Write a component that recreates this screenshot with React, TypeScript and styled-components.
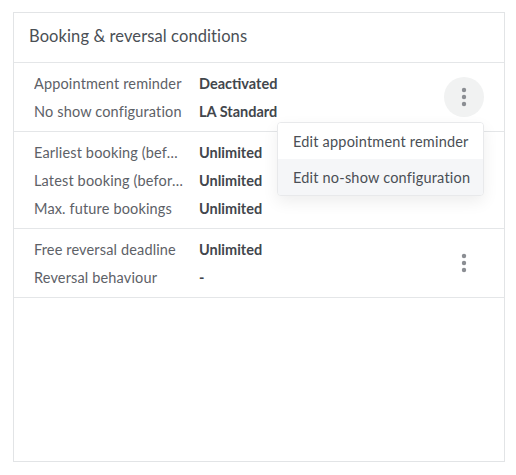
import styled, { createGlobalStyle } from "styled-components";

const GlobalStyle = createGlobalStyle`
  body {
    margin: 0;
    background: #ffffff;
    font-family: Lato, "Noto Sans", sans-serif;
  }
`;

type Row = { label: string; value: string };

const sections: { rows: Row[]; open?: boolean; hovered?: boolean }[] = [
  {
    rows: [
      { label: "Appointment reminder", value: "Deactivated" },
      { label: "No show configuration", value: "LA Standard" },
    ],
    open: true,
    hovered: true,
  },
  {
    rows: [
      { label: "Earliest booking (before appointment)", value: "Unlimited" },
      { label: "Latest booking (before appointment)", value: "Unlimited" },
      { label: "Max. future bookings", value: "Unlimited" },
    ],
  },
  {
    rows: [
      { label: "Free reversal deadline", value: "Unlimited" },
      { label: "Reversal behaviour", value: "-" },
    ],
  },
];

const KebabIcon = () => (
  <svg width="6" height="20" viewBox="0 0 6 20">
    <circle cx="3" cy="3" r="2.2" fill="#8b8e93" />
    <circle cx="3" cy="10" r="2.2" fill="#8b8e93" />
    <circle cx="3" cy="17" r="2.2" fill="#8b8e93" />
  </svg>
);

const App = () => {
  return (
    <>
      <GlobalStyle />
      <SCCard>
        <SCHeader>Booking &amp; reversal conditions</SCHeader>
        {sections.map((section, i) => (
          <SCSection key={i}>
            <SCRows>
              {section.rows.map((row) => (
                <SCRow key={row.label}>
                  <SCLabel>{row.label}</SCLabel>
                  <SCValue>{row.value}</SCValue>
                </SCRow>
              ))}
            </SCRows>
            {i !== 1 && (
              <SCActionWrap>
                <SCKebab $active={!!section.hovered}>
                  <KebabIcon />
                </SCKebab>
                {section.open && (
                  <SCMenu>
                    <SCMenuItem>Edit appointment reminder</SCMenuItem>
                    <SCMenuItem $highlighted>Edit no-show configuration</SCMenuItem>
                  </SCMenu>
                )}
              </SCActionWrap>
            )}
          </SCSection>
        ))}
      </SCCard>
    </>
  );
};

export default App;

const SCCard = styled.div`
  box-sizing: border-box;
  margin: 12px 0 0 13px;
  width: 492px;
  height: 450px;
  border: 1px solid #e2e4e6;
  background: #fff;
`;

const SCHeader = styled.div`
  box-sizing: border-box;
  height: 50px;
  display: flex;
  align-items: center;
  padding: 0 15px 4px;
  font-size: 16.5px;
  letter-spacing: 0.1px;
  color: #4a4f55;
  border-bottom: 1px solid #e4e6e8;
`;

const SCSection = styled.div`
  display: flex;
  align-items: center;
  padding: 6px 20px;
  border-bottom: 1px solid #e4e6e8;
`;

const SCRows = styled.div`
  flex: 1;
  display: flex;
  flex-direction: column;
`;

const SCRow = styled.div`
  display: flex;
  align-items: center;
  height: 28px;
  font-size: 14.5px;
  letter-spacing: 0.15px;
`;

const SCLabel = styled.span`
  width: 150px;
  margin-right: 15px;
  color: #5d6167;
  white-space: nowrap;
  overflow: hidden;
  text-overflow: ellipsis;
`;

const SCValue = styled.span`
  font-weight: 700;
  letter-spacing: 0;
  color: #42464c;
`;

const SCActionWrap = styled.div`
  position: relative;
`;

const SCKebab = styled.button<{ $active: boolean }>`
  width: 40px;
  height: 40px;
  border: none;
  border-radius: 50%;
  padding: 0;
  display: flex;
  align-items: center;
  justify-content: center;
  background: ${(p) => (p.$active ? "#f1f2f2" : "transparent")};
  cursor: pointer;
`;

const SCMenu = styled.div`
  position: absolute;
  top: 45px;
  right: 0;
  width: 207px;
  box-sizing: border-box;
  background: #fff;
  border: 1px solid #e8e9eb;
  border-radius: 4px;
  box-shadow: 0 6px 16px rgba(0, 0, 0, 0.07);
  overflow: hidden;
  z-index: 2;
`;

const SCMenuItem = styled.div<{ $highlighted?: boolean }>`
  height: 36px;
  display: flex;
  align-items: center;
  padding: 0 15px;
  font-size: 14.5px;
  letter-spacing: 0.2px;
  color: #4a4f55;
  white-space: nowrap;
  background: ${(p) => (p.$highlighted ? "#f5f6f8" : "#fff")};
`;
